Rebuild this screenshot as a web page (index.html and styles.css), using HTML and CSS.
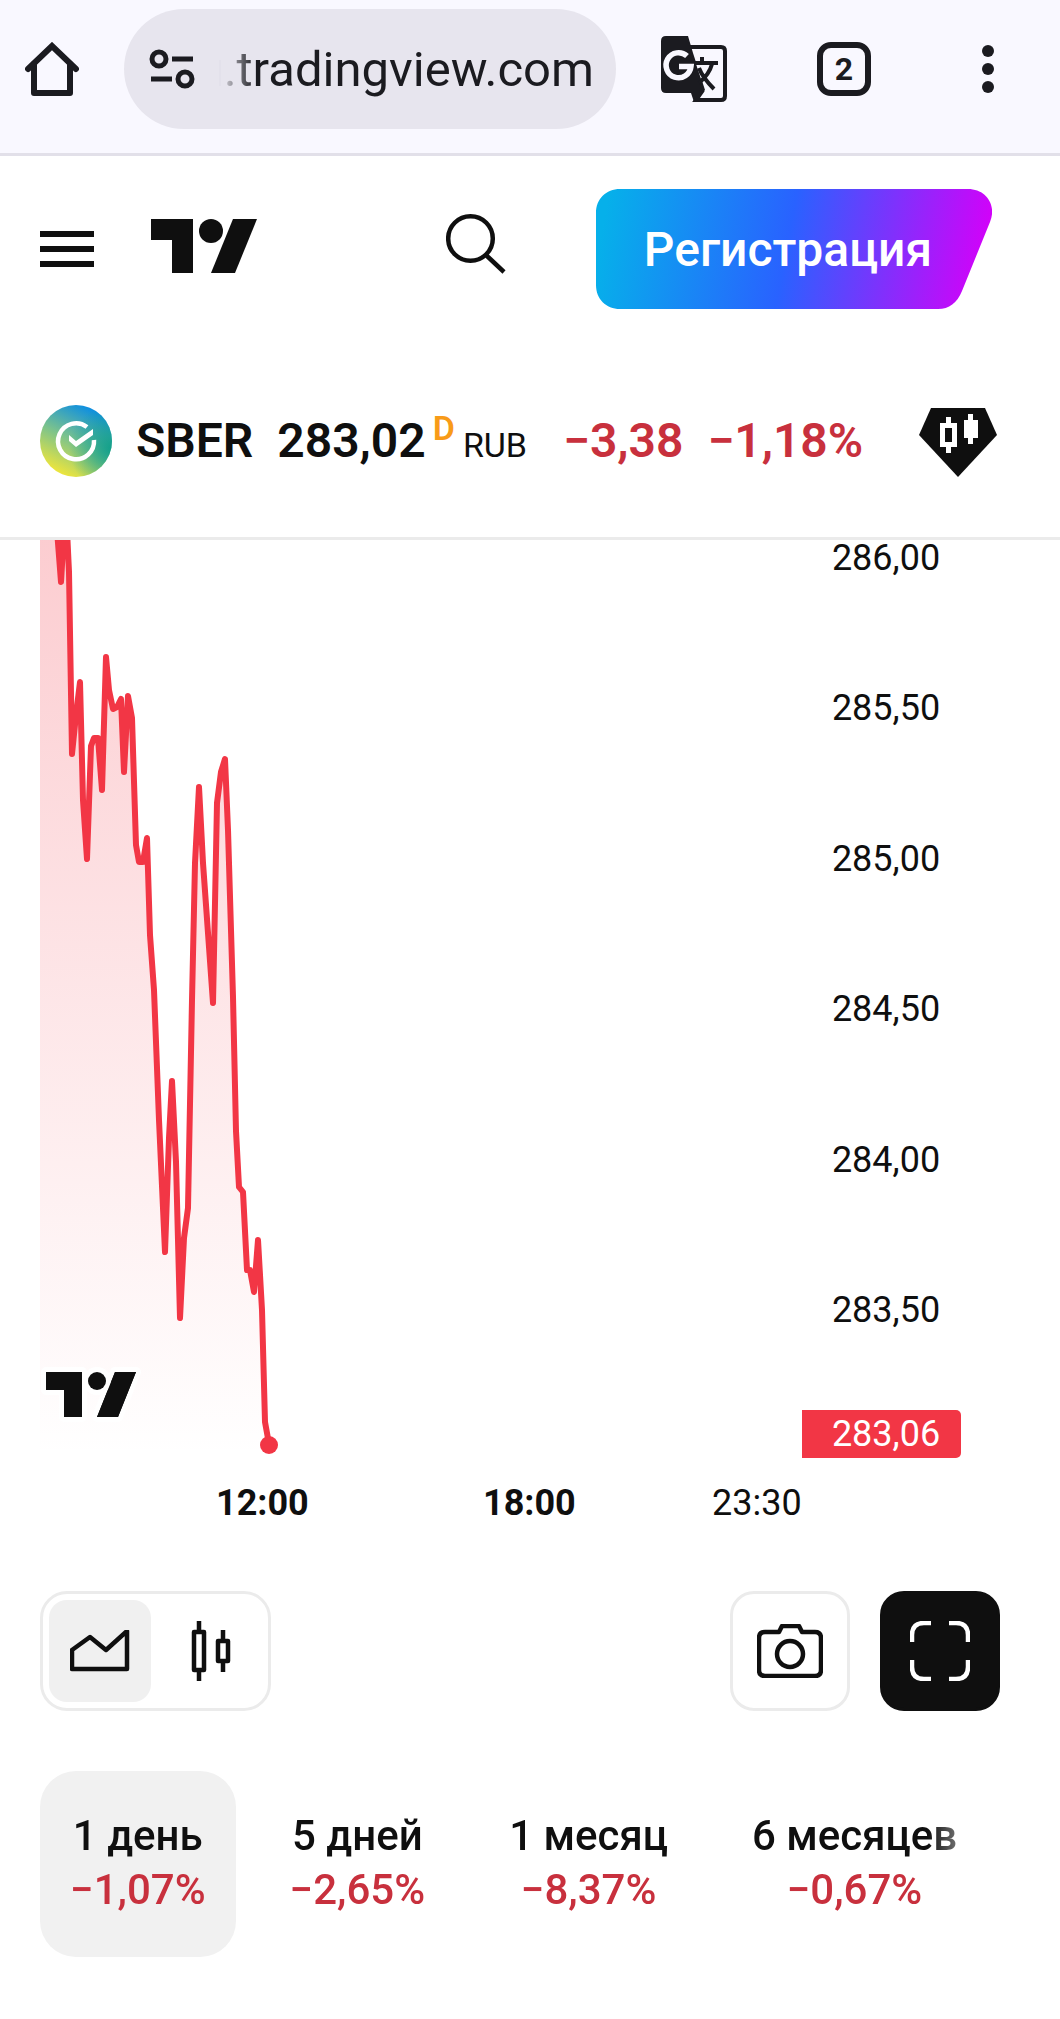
FILE: index.html
```html
<!DOCTYPE html>
<html lang="ru">
<head>
  <meta charset="UTF-8">
  <title>SBER 283,02 — TradingView</title>
  <meta name="viewport" content="width=device-width, initial-scale=1.0">
  <link rel="stylesheet" href="styles.css">
</head>
<body>
  <!-- Browser bar -->
  <div class="browser-bar">
    <button class="icon-btn" aria-label="Home">
      <svg width="54" height="54" viewBox="0 0 54 54" fill="none" stroke="#1b1b20" stroke-width="6" stroke-linecap="round" stroke-linejoin="round">
        <path d="M3 27L27 4L51 27" stroke-linejoin="miter"/>
        <path d="M9 22V51H45V22"/>
      </svg>
    </button>
    <div class="address">
      <svg width="46" height="40" viewBox="0 0 46 40" fill="none" stroke="#1b1b20" stroke-width="5">
        <circle cx="10" cy="10" r="7"/>
        <path d="M23 10H44M2 30H23"/>
        <circle cx="36" cy="30" r="7"/>
      </svg>
      <input class="url" type="text" dir="rtl" value="ru.tradingview.com" aria-label="Address">
    </div>
    <button class="icon-btn translate" aria-label="Translate">
      <svg width="66" height="66" viewBox="0 0 66 66">
        <path d="M28 11H60Q64 11 64 15V60Q64 64 60 64H35L42 54" fill="none" stroke="#1b1b20" stroke-width="4"/>
        <path d="M5 0H27L32 17L44 54L33 66L30 57H5Q0 57 0 52V5Q0 0 5 0Z" fill="#1b1b20"/>
        <path d="M26 20A12.5 12.5 0 1 0 30 30.500H18" fill="none" stroke="#f9f8ff" stroke-width="5.500"/>
        <path d="M35 28H47L40 43Z" fill="#f9f8ff"/>
        <path d="M41 21V27M34 27H57M51 28C49 36 45 41 38 47M38 32C41 40 46 46 53 53" fill="none" stroke="#1b1b20" stroke-width="4"/>
      </svg>
    </button>
    <button class="tabs-btn" aria-label="Tabs">2</button>
    <button class="icon-btn more" aria-label="More">
      <svg width="12" height="48" viewBox="0 0 12 48" fill="#1b1b20">
        <circle cx="6" cy="6" r="6"/>
        <circle cx="6" cy="24" r="6"/>
        <circle cx="6" cy="42" r="6"/>
      </svg>
    </button>
  </div>

  <!-- Site header -->
  <header class="site-header">
    <button class="icon-btn" aria-label="Меню">
      <svg width="54" height="36" viewBox="0 0 54 36" fill="#0f0f0f">
        <path d="M0 0H54V6H0ZM0 15H54V21H0ZM0 30H54V36H0Z"/>
      </svg>
    </button>
    <a class="logo" href="#" aria-label="TradingView">
      <svg width="106" height="60" viewBox="0 0 106 60" fill="#0f0f0f">
        <path d="M0 0H42V54H21V21H0Z"/>
        <circle cx="60" cy="12" r="12"/>
        <path d="M82 0H106L84 54H60Z"/>
      </svg>
    </a>
    <button class="icon-btn search" aria-label="Поиск">
      <svg width="60" height="72" viewBox="0 0 60 72" fill="none" stroke="#0f0f0f" stroke-width="4.5">
        <circle cx="24.5" cy="25.5" r="22.3"/>
        <path d="M40 42L58 59"/>
      </svg>
    </button>
    <button class="signup">
      <svg class="signup-bg" viewBox="0 0 396 120" preserveAspectRatio="none">
        <defs>
          <linearGradient id="signup-fill" gradientUnits="userSpaceOnUse" x1="6" y1="40" x2="385" y2="110">
            <stop offset="0" stop-color="#06b0ea"/>
            <stop offset="0.48" stop-color="#2962ff"/>
            <stop offset="1" stop-color="#d500f9"/>
          </linearGradient>
        </defs>
        <path fill="url(#signup-fill)" d="M24 0H372C390 0 401 16 394 33L366 102C361 114 353 120 342 120H24C10 120 0 110 0 96V24C0 10 10 0 24 0Z"/>
      </svg>
      <span>Регистрация</span>
    </button>
  </header>

  <!-- Symbol -->
  <div class="ticker">
    <svg width="72" height="72" viewBox="0 0 72 72">
      <defs>
        <linearGradient id="sber-a" x1="0.25" y1="0.95" x2="0.7" y2="0.05">
          <stop offset="0" stop-color="#f0e63a"/>
          <stop offset="0.5" stop-color="#7cc38c"/>
          <stop offset="1" stop-color="#0e8fe0"/>
        </linearGradient>
        <radialGradient id="sber-b" cx="1" cy="0.6" r="0.6">
          <stop offset="0" stop-color="#12a08a"/>
          <stop offset="1" stop-color="#12a08a" stop-opacity="0"/>
        </radialGradient>
      </defs>
      <circle cx="36" cy="36" r="36" fill="url(#sber-a)"/>
      <circle cx="36" cy="36" r="36" fill="url(#sber-b)"/>
      <path d="M47 22A18 18 0 1 0 54 35" fill="none" stroke="#fff" stroke-width="4.5"/>
      <path d="M29 30L36 36L53 24V30L36 42L29 36Z" fill="#fff"/>
    </svg>
    <div class="quote">
      <h1 class="symbol">SBER</h1>
      <span class="price">283,02</span>
      <sup class="delay">D</sup>
      <span class="currency">RUB</span>
      <span class="change">−3,38</span>
      <span class="change">−1,18%</span>
    </div>
    <button class="icon-btn gem" aria-label="Суперграфики">
      <svg width="78" height="72" viewBox="0 0 78 72">
        <path d="M12 3H66L78 30L39 72L0 30Z" fill="#0f0f0f"/>
        <path d="M27 12H32V18H38V42H32V48H27V42H21V18H27ZM26 23V37H33V23ZM49 9H54V15H59V33H54V39H49V33H45V15H49Z" fill="#fff" fill-rule="evenodd"/>
      </svg>
    </button>
  </div>

  <!-- Chart -->
  <main>
    <div class="chart">
      <svg class="plot" viewBox="40 540 762 920" preserveAspectRatio="xMinYMin meet">
        <defs>
          <linearGradient id="area-fill" gradientUnits="userSpaceOnUse" x1="0" y1="540" x2="0" y2="1456">
            <stop offset="0" stop-color="#f23645" stop-opacity="0.25"/>
            <stop offset="1" stop-color="#f23645" stop-opacity="0"/>
          </linearGradient>
        </defs>
        <path fill="url(#area-fill)" d="M40 530L57 530L61 582L64 530L67 530L69 572L72 754L76 715L80 682L83 800L87 859L91 746L94 738H98L102 790L106 657L109 690L113 709L117 707L121 699L124 772L128 696L132 718L136 845L139 862H143L147 838L150 935L154 990L159 1120L165 1252L169 1138L172 1081L176 1162L180 1318L184 1238L188 1208L192 1000L195 863L199 787L203 863L213 1003L217 803L221 772L225 759L228 830L233 997L236 1131L239 1187L243 1192L247 1270L250 1268L254 1292L258 1240L262 1310L265 1422L269 1444V1456H40Z"/>
        <path fill="none" stroke="#f23645" stroke-width="6" stroke-linecap="round" stroke-linejoin="round" d="M57 530L61 582L64 530H67L69 572L72 754L76 715L80 682L83 800L87 859L91 746L94 738H98L102 790L106 657L109 690L113 709L117 707L121 699L124 772L128 696L132 718L136 845L139 862H143L147 838L150 935L154 990L159 1120L165 1252L169 1138L172 1081L176 1162L180 1318L184 1238L188 1208L192 1000L195 863L199 787L203 863L213 1003L217 803L221 772L225 759L228 830L233 997L236 1131L239 1187L243 1192L247 1270H250L254 1292L258 1240L262 1310L265 1422L269 1444"/>
        <circle cx="269" cy="1445" r="9" fill="#f23645"/>
        <g fill="#0f0f0f" stroke="#fff" stroke-width="10" stroke-linejoin="round" paint-order="stroke">
          <path d="M46 1372H82V1417H64V1390H46Z"/>
          <path d="M115 1372H136L118 1417H97Z"/>
          <circle cx="97" cy="1381" r="9"/>
        </g>
        <path fill="#0f0f0f" d="M46 1372H82V1417H64V1390H46ZM115 1372H136L118 1417H97Z"/>
      </svg>
      <div class="price-axis">
        <div class="levels">
          <span>286,00</span>
          <span>285,50</span>
          <span>285,00</span>
          <span>284,50</span>
          <span>284,00</span>
          <span>283,50</span>
        </div>
        <div class="last-price">283,06</div>
      </div>
      <div class="time-axis">
        <b>12:00</b>
        <b>18:00</b>
        <span>23:30</span>
      </div>
    </div>

    <div class="toolbar">
      <div class="chart-types">
        <button class="type active" aria-label="Область">
          <svg width="60" height="42" viewBox="0 0 60 42" fill="none" stroke="#0f0f0f" stroke-width="4.5" stroke-linejoin="round">
            <path d="M2 39V20L20 7L36 20L57 1V39Z"/>
          </svg>
        </button>
        <button class="type" aria-label="Свечи">
          <svg width="42" height="60" viewBox="0 0 42 60" fill="none" stroke="#0f0f0f" stroke-width="4.5" stroke-linejoin="round">
            <path d="M4 11H14V49H4ZM9 0V11M9 49V60M28 20H38V40H28ZM33 9V20M33 40V51"/>
          </svg>
        </button>
      </div>
      <button class="tool camera" aria-label="Снимок графика">
        <svg width="66" height="54" viewBox="0 0 66 54" fill="none" stroke="#0f0f0f" stroke-width="4.5" stroke-linejoin="round">
          <path d="M8 8H22L25 2H42L45 8H58Q64 8 64 14V46Q64 52 58 52H8Q2 52 2 46V14Q2 8 8 8Z"/>
          <circle cx="33" cy="30" r="13"/>
        </svg>
      </button>
      <button class="tool dark" aria-label="Во весь экран">
        <svg width="60" height="60" viewBox="0 0 60 60" fill="none" stroke="#fff" stroke-width="4.5">
          <path d="M2 21V14Q2 2 14 2H21M39 2H46Q58 2 58 14V21M58 39V46Q58 58 46 58H39M21 58H14Q2 58 2 46V39"/>
        </svg>
      </button>
    </div>

    <div class="periods">
      <button class="period active">1 день<span>−1,07%</span></button>
      <button class="period">5 дней<span>−2,65%</span></button>
      <button class="period">1 месяц<span>−8,37%</span></button>
      <button class="period">6 месяцев<span>−0,67%</span></button>
    </div>
  </main>
</body>
</html>
```
FILE: styles.css
```css
body {
  margin: 0;
  background: #fff;
  color: #0f0f0f;
  font-family: Roboto, Arial, sans-serif;
  overflow-x: hidden;
}
button {
  background: none;
  border: none;
  padding: 0;
  color: inherit;
  font-family: inherit;
  cursor: pointer;
}
svg {
  display: block;
  flex: none;
}
.icon-btn {
  flex: none;
}

/* Browser bar */
.browser-bar {
  display: flex;
  align-items: center;
  padding: 9px 66px 24px 25px;
  background: #f9f8ff;
  border-bottom: 3px solid #e2e0e9;
}
.address {
  flex: 1;
  min-width: 0;
  height: 120px;
  box-sizing: border-box;
  display: flex;
  align-items: center;
  gap: 24px;
  margin: 0 45px;
  padding: 0 22px 0 25px;
  border-radius: 60px;
  background: #e7e5ee;
}
.url {
  flex: 1;
  min-width: 0;
  border: none;
  outline: none;
  padding: 0;
  background: none;
  color: #1b1b20;
  font-family: Roboto, Arial, sans-serif;
  font-size: 49px;
  mask-image: linear-gradient(to right, transparent, #000 36px);
}
.tabs-btn {
  width: 54px;
  height: 54px;
  box-sizing: border-box;
  margin-left: 90px;
  border: 6px solid #1b1b20;
  border-radius: 14px;
  color: #1b1b20;
  font-size: 32px;
  font-weight: 700;
  line-height: 42px;
}
.more {
  margin-left: 111px;
}

/* Site header */
.site-header {
  display: flex;
  align-items: center;
  padding: 33px 68px 33px 40px;
}
.logo {
  margin-left: 57px;
}
.search {
  margin-left: auto;
  margin-right: 90px;
}
.signup {
  position: relative;
  width: 396px;
  height: 120px;
  padding-right: 12px;
  color: #fff;
  font-size: 48px;
  font-weight: 500;
}
.signup-bg {
  position: absolute;
  top: 0;
  left: 0;
  width: 100%;
  height: 100%;
}
.signup span {
  position: relative;
}

/* Symbol row */
.ticker {
  display: flex;
  align-items: center;
  gap: 24px;
  padding: 63px 63px 60px 40px;
  border-bottom: 3px solid #ebebeb;
}
.quote {
  display: flex;
  align-items: baseline;
  padding-top: 4px;
  font-size: 48px;
  line-height: 60px;
  font-weight: 600;
}
.symbol {
  margin: 0 24px 0 0;
  font-size: 48px;
  font-weight: 600;
}
.delay {
  margin: 0 8px 0 7px;
  align-self: flex-start;
  color: #f89b18;
  font-size: 34px;
  line-height: 34px;
}
.currency {
  margin-right: 12px;
  font-size: 34px;
  font-weight: 400;
}
.change {
  margin-left: 24px;
  color: #c8303d;
}
.gem {
  margin-left: auto;
}

/* Chart */
.chart {
  display: grid;
  grid-template-columns: 1fr 159px;
  padding: 0 99px 0 40px;
  font-size: 36px;
}
.plot {
  width: 100%;
  height: 920px;
}
.price-axis {
  text-align: center;
}
.levels {
  display: flex;
  flex-direction: column;
  justify-content: space-between;
  height: 788px;
  line-height: 36px;
  padding-left: 9px;
}
.last-price {
  margin-top: 82px;
  padding-left: 9px;
  line-height: 48px;
  border-radius: 0 5px 5px 0;
  background: #f23645;
  color: #fff;
}
.time-axis {
  display: grid;
  grid-template-columns: 176fr 267fr 229fr 90fr;
  margin-top: 25px;
  line-height: 36px;
}
.time-axis b {
  font-weight: 700;
}
.time-axis :first-child {
  grid-column: 2;
}

/* Toolbar */
.toolbar {
  display: flex;
  padding: 70px 60px 0 40px;
}
.chart-types {
  display: flex;
  gap: 9px;
  padding: 6px;
  border: 3px solid #ebebeb;
  border-radius: 27px;
}
.type {
  width: 102px;
  height: 102px;
  display: flex;
  align-items: center;
  justify-content: center;
  border-radius: 18px;
}
.type.active {
  background: #f0f0f0;
}
.tool {
  width: 120px;
  height: 120px;
  box-sizing: border-box;
  display: flex;
  align-items: center;
  justify-content: center;
  border: 3px solid #ebebeb;
  border-radius: 24px;
}
.camera {
  margin-left: auto;
  margin-right: 30px;
}
.dark {
  border-color: #0f0f0f;
  background: #0f0f0f;
}

/* Periods */
.periods {
  display: flex;
  gap: 24px;
  margin: 60px 60px 60px 40px;
  overflow: hidden;
  mask-image: linear-gradient(to left, transparent, #000 72px);
}
.period {
  flex: none;
  padding: 38px 30px 40px;
  border-radius: 36px;
  font-size: 42px;
  font-weight: 500;
  line-height: 54px;
  text-align: center;
}
.period span {
  display: block;
  color: #c8303d;
}
.period.active {
  background: #f1f1f1;
}
```
